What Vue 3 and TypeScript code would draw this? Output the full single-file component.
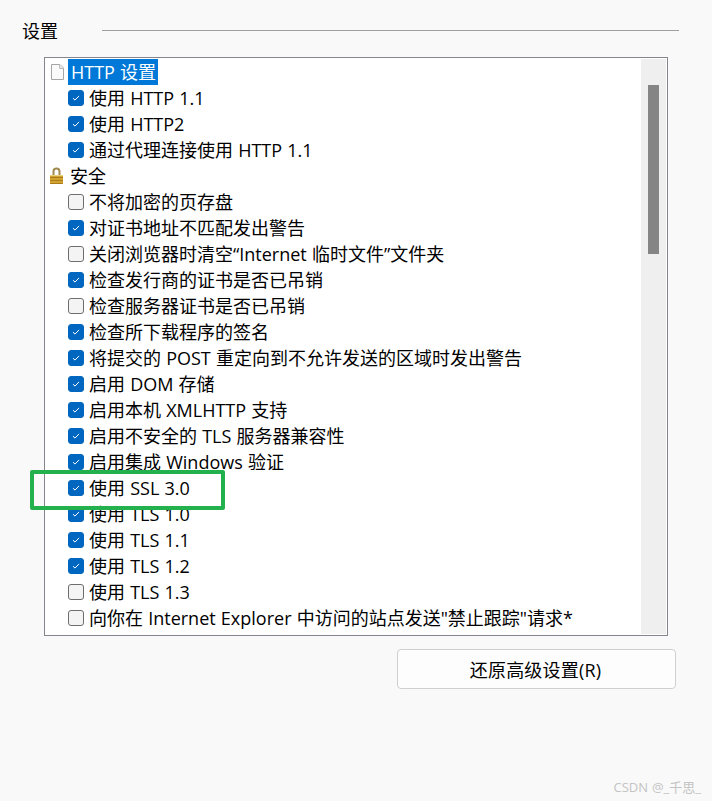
<script setup lang="ts">
interface Row {
  label: string;
  checked: boolean;
}

const httpRows: Row[] = [
  { label: '使用 HTTP 1.1', checked: true },
  { label: '使用 HTTP2', checked: true },
  { label: '通过代理连接使用 HTTP 1.1', checked: true },
];

const securityRows: Row[] = [
  { label: '不将加密的页存盘', checked: false },
  { label: '对证书地址不匹配发出警告', checked: true },
  { label: '关闭浏览器时清空“Internet 临时文件”文件夹', checked: false },
  { label: '检查发行商的证书是否已吊销', checked: true },
  { label: '检查服务器证书是否已吊销', checked: false },
  { label: '检查所下载程序的签名', checked: true },
  { label: '将提交的 POST 重定向到不允许发送的区域时发出警告', checked: true },
  { label: '启用 DOM 存储', checked: true },
  { label: '启用本机 XMLHTTP 支持', checked: true },
  { label: '启用不安全的 TLS 服务器兼容性', checked: true },
  { label: '启用集成 Windows 验证', checked: true },
  { label: '使用 SSL 3.0', checked: true },
  { label: '使用 TLS 1.0', checked: true },
  { label: '使用 TLS 1.1', checked: true },
  { label: '使用 TLS 1.2', checked: true },
  { label: '使用 TLS 1.3', checked: false },
  { label: '向你在 Internet Explorer 中访问的站点发送"禁止跟踪"请求*', checked: false },
];
</script>

<template>
  <div class="page">
    <div class="legend">
      <span class="legend-title">设置</span>
      <span class="legend-line"></span>
    </div>

    <div class="list-box">
      <div class="list">
        <div class="row group">
          <svg class="group-icon" width="19" height="20" viewBox="0 0 19 20">
            <path d="M2.5 2.5h8.5l3.5 3.5v11.5h-12z" fill="#fbfbfb" stroke="#a6a6a6" />
            <path d="M10.5 2.5v4h4" fill="#e8e8e8" stroke="#bdbdbd" />
          </svg>
          <span class="selected">HTTP 设置</span>
        </div>
        <div v-for="row in httpRows" :key="row.label" class="row">
          <span class="check" :class="{ on: row.checked }">
            <svg v-if="row.checked" width="14" height="14" viewBox="0 0 14 14">
              <path d="M4 7.2l2 1.9 4-4.2" fill="none" stroke="#fff" stroke-width="1" />
            </svg>
          </span>
          <span>{{ row.label }}</span>
        </div>

        <div class="row group">
          <svg class="group-icon" width="19" height="20" viewBox="0 0 19 20">
            <path d="M4.5 9V5.5a3 3 0 0 1 6 0V9" fill="none" stroke="#a08a50" stroke-width="2" />
            <rect x="1" y="9" width="13" height="9" fill="#d2a12e" />
            <path d="M1 11.5h13M1 14.5h13M1 17.5h13" stroke="#a87d1c" />
            <path d="M1 9.5h13" stroke="#ecd07a" />
          </svg>
          <span class="group-label">安全</span>
        </div>
        <div v-for="row in securityRows" :key="row.label" class="row">
          <span class="check" :class="{ on: row.checked }">
            <svg v-if="row.checked" width="14" height="14" viewBox="0 0 14 14">
              <path d="M4 7.2l2 1.9 4-4.2" fill="none" stroke="#fff" stroke-width="1" />
            </svg>
          </span>
          <span>{{ row.label }}</span>
        </div>
      </div>

      <div class="scrollbar">
        <div class="thumb"></div>
      </div>

      <div class="highlight"></div>
    </div>

    <div class="actions">
      <button class="reset" type="button">还原高级设置(R)</button>
    </div>

    <div class="watermark">CSDN @_千思_</div>
  </div>
</template>

<style scoped>
.page {
  position: relative;
  width: 712px;
  height: 801px;
  box-sizing: border-box;
  padding: 19px 33px 0 22px;
  background: #f9f9f9;
  color: #000;
  font-family: "Open Sans", "Noto Sans CJK SC", sans-serif;
  font-size: 18px;
  word-spacing: 0.5px;
  overflow: hidden;
}

.legend {
  display: flex;
  align-items: center;
  gap: 44px;
  height: 23px;
  margin-bottom: 15px;
}

.legend-title {
  margin-top: -2px;
}

.legend-line {
  flex: 1;
  height: 1px;
  background: #a0a0a0;
}

.list-box {
  position: relative;
  display: flex;
  width: 624px;
  height: 579px;
  box-sizing: border-box;
  margin-left: 22px;
  padding: 1px;
  border: 1px solid #85858c;
  background: #fff;
}

.list {
  flex: 1;
  padding-left: 3px;
  overflow: hidden;
}

.row {
  display: flex;
  align-items: center;
  height: 26px;
  padding-left: 19px;
  white-space: nowrap;
  line-height: 26px;
}

.row.group {
  padding-left: 0;
}

.group-icon {
  flex: none;
}

.selected {
  padding: 0 2px 0 3px;
  background: #0078d7;
  color: #fff;
}

.group-label {
  padding-left: 2px;
}

.check {
  flex: none;
  display: block;
  width: 14px;
  height: 14px;
  margin-right: 5px;
  border: 1px solid #6d6d6d;
  border-radius: 3px;
  background: #f4f4f4;
}

.check.on {
  border-color: #0067c0;
  background: #0067c0;
}

.check svg {
  display: block;
}

.scrollbar {
  flex: none;
  width: 25px;
  padding-top: 26px;
  background: #efefef;
}

.thumb {
  width: 11px;
  height: 169px;
  margin-left: 7px;
  background: #858585;
}

.highlight {
  position: absolute;
  left: -15px;
  top: 412px;
  width: 195px;
  height: 40px;
  box-sizing: border-box;
  border: 4px solid #22b14c;
  border-radius: 2px;
}

.actions {
  display: flex;
  justify-content: flex-end;
  margin-top: 13px;
  margin-right: 3px;
}

.reset {
  width: 279px;
  height: 40px;
  padding: 0 2px 0 0;
  border: 1px solid #cfcfcf;
  border-radius: 4px;
  background: #fdfdfd;
  color: #000;
  font: inherit;
  letter-spacing: 0.2px;
}

.watermark {
  position: absolute;
  right: 11px;
  bottom: 5px;
  color: #c4c4c4;
  font-size: 13px;
}
</style>

<style>
body {
  background: #f9f9f9;
}
</style>
